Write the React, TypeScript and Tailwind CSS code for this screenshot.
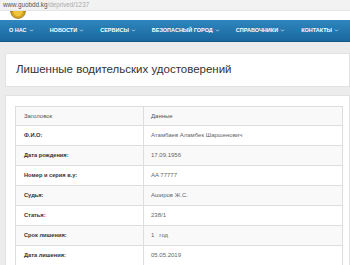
import { ChevronDown } from "lucide-react";

const menu = [
  "О нас",
  "Новости",
  "Сервисы",
  "Безопасный город",
  "Справочники",
  "Контакты",
];

const rows: [string, string][] = [
  ["Ф.И.О:", "Атамбаев Аламбек Шаршенович"],
  ["Дата рождения:", "17.09.1956"],
  ["Номер и серия в.у:", "AA 77777"],
  ["Судья:", "Аширов Ж.С."],
  ["Статья:", "238/1"],
  ["Срок лишения:", "1   год"],
  ["Дата лишения:", "05.05.2019"],
];

export default function App() {
  return (
    <div className="w-[350px] h-[265px] overflow-hidden bg-[#ececec] font-['Liberation_Sans',Arial,sans-serif]">
      {/* address bar */}
      <div className="h-[10px] bg-[#f2f2f2] pl-[3px] text-[6.3px] leading-[9px] whitespace-nowrap">
        <span className="text-[#555]">www.guobdd.kg</span>
        <span className="text-[#aaa]">/deprived/1237</span>
      </div>

      {/* logo strip */}
      <div className="h-[10px] bg-white pl-[10px] border-t border-[#e4e4e4]">
        <svg width="16" height="8" viewBox="0 0 16 8">
          <path d="M0.5 0 Q1 7 8 7.5 Q15 7 15.5 0 Z" fill="#d6a21e" stroke="#7a5a10" strokeWidth="0.6" />
          <path d="M3 0 Q4 5 8 5.5 Q12 5 13 0 Z" fill="#f0c43c" />
        </svg>
      </div>

      {/* navigation */}
      <nav className="h-[22px] flex items-center justify-between pl-[9px] pr-[11px] bg-gradient-to-b from-[#2f86bf] to-[#19679d] border-b border-[#125683]">
        {menu.map((m) => (
          <div key={m} className="flex items-center gap-[2px] text-white text-[5.5px] font-bold uppercase whitespace-nowrap">
            {m}
            <ChevronDown size={5} strokeWidth={3} />
          </div>
        ))}
      </nav>

      <div className="pl-[5px] pt-[11px]">
        {/* title card */}
        <div className="h-[34px] bg-white border border-[#e2e2e2] flex items-center pl-[10px]">
          <h1 className="text-[11.5px] text-[#333]">Лишенные водительских удостоверений</h1>
        </div>

        {/* content card */}
        <div className="mt-[8px] bg-white border border-[#e2e2e2] pt-[10px] pl-[9px] h-[200px]">
          <table className="w-[328px] border-collapse text-[6px]">
            <tbody>
              <tr className="h-[19px] bg-[#f9f9f9]">
                <td className="w-[128px] border border-[#dddddd] px-[8px] text-[#555]">Заголовок</td>
                <td className="border border-[#dddddd] px-[7px] text-[#555]">Данные</td>
              </tr>
              {rows.map(([k, v], i) => (
                <tr key={k} className={i % 2 === 0 ? "h-[20px] bg-white" : "h-[20px] bg-[#f9f9f9]"}>
                  <td className="border border-[#dddddd] px-[8px] text-[5.7px] font-bold text-[#333]">{k}</td>
                  <td className="border border-[#dddddd] px-[7px] text-[#666] whitespace-pre">{v}</td>
                </tr>
              ))}
            </tbody>
          </table>
        </div>
      </div>
    </div>
  );
}
